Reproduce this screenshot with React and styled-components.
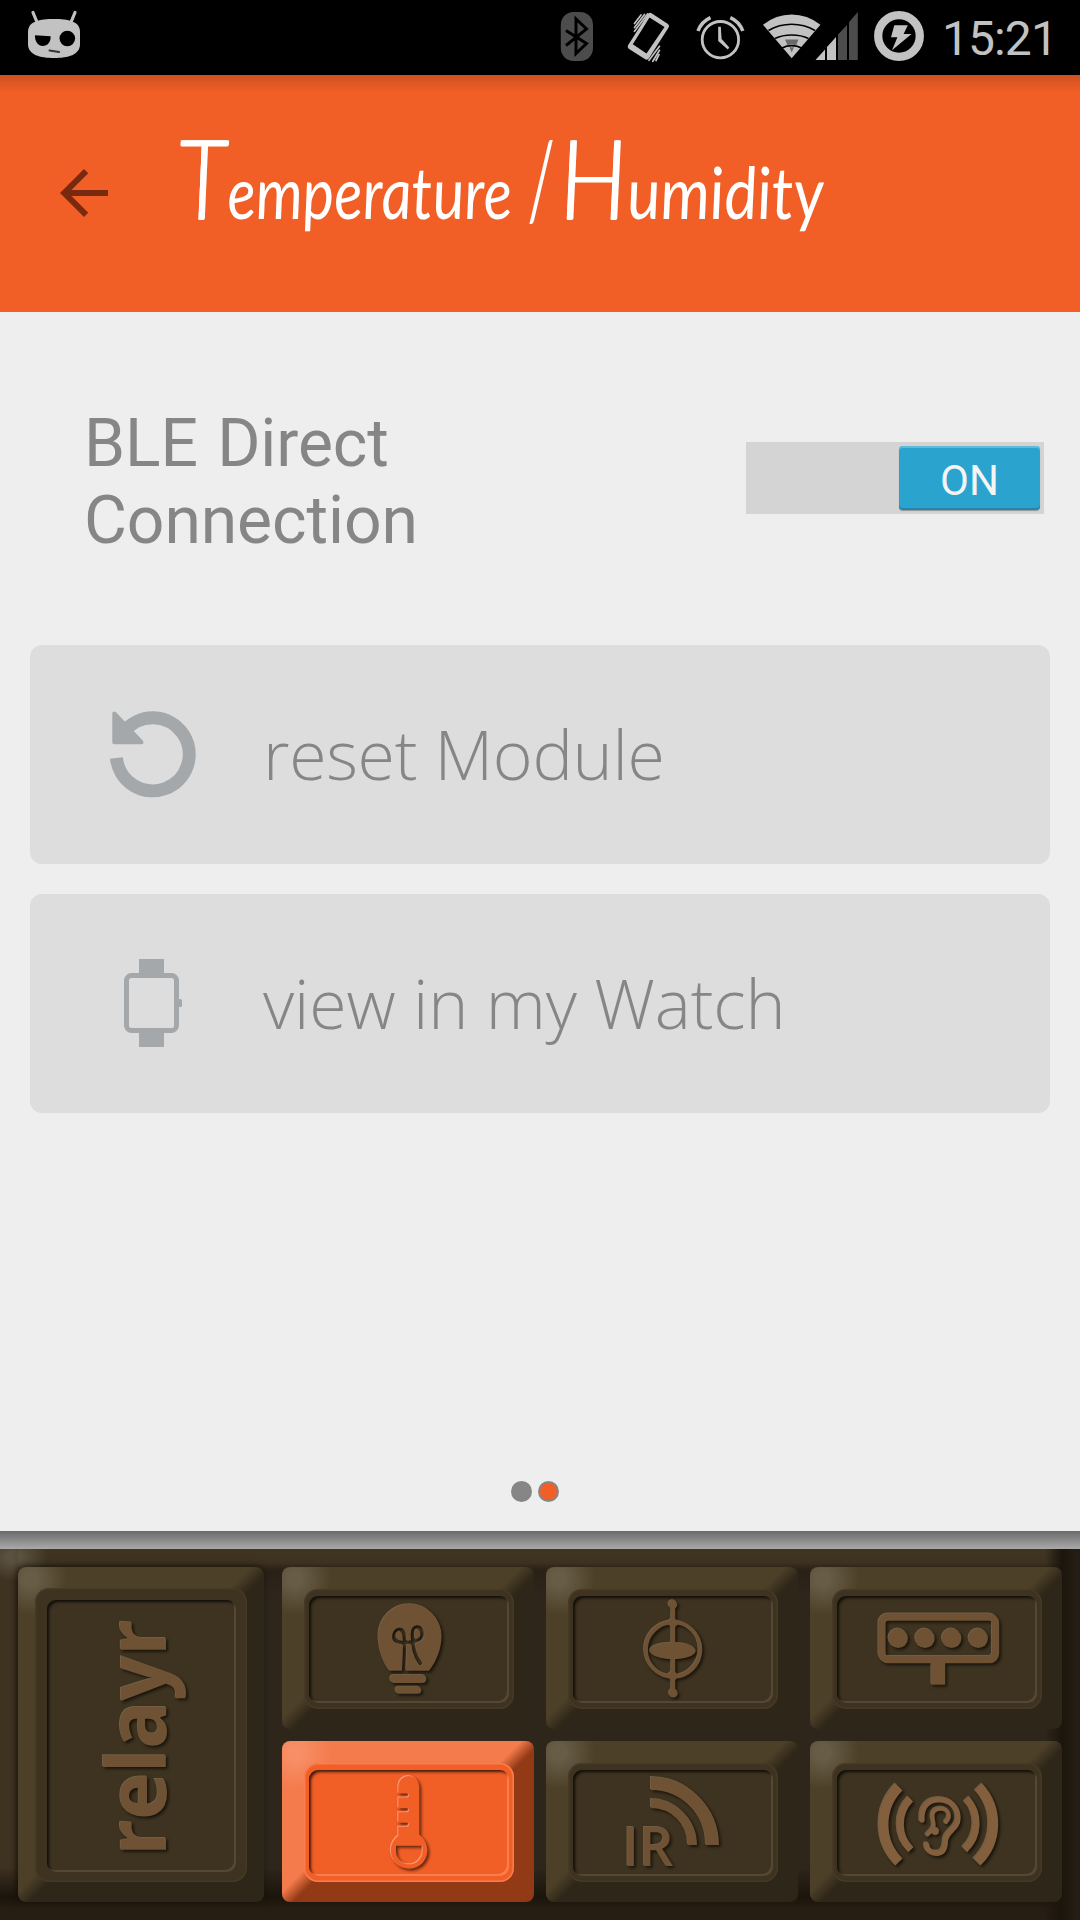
import React from "react";
import styled, { createGlobalStyle, css } from "styled-components";

const GlobalStyle = createGlobalStyle`
  * { box-sizing: border-box; }
  html, body { margin: 0; padding: 0; }
  body { background: #eee; font-family: Roboto, sans-serif; }
  svg { display: block; flex: none; }
`;

const Screen = styled.div`
  width: 1080px;
  height: 1920px;
  display: flex;
  flex-direction: column;
  overflow: hidden;
  background: #eeeeee;
`;

/* ---------- status bar ---------- */

const StatusBar = styled.div`
  flex: none;
  height: 75px;
  display: flex;
  align-items: center;
  justify-content: space-between;
  padding: 0 23px 0 24px;
  background: #000;
`;

const StatusGroup = styled.div`
  display: flex;
  align-items: center;
`;

const StatusIcon = styled.svg`
  width: ${(p) => p.$w}px;
  height: 75px;
  margin-right: ${(p) => p.$after || 0}px;
`;

const Clock = styled.span`
  width: 131px;
  padding-top: 2px;
  font: 400 48px/75px Roboto, sans-serif;
  letter-spacing: -0.9px;
  color: #c2c2c2;
  text-align: right;
  white-space: nowrap;
`;

const LIGHT = "#c2c2c2";
const DIM = "#4c4c4c";

const CidIcon = () => (
  <StatusIcon $w={60} viewBox="24 0 60 75">
    <path d="M33 12.5L36.5 21M75 12.5L71.5 21" stroke={LIGHT} strokeWidth="3.2" strokeLinecap="round" />
    <path d="M54 19C68 19 80 21 80 32V44C80 55 68 58 54 58S28 55 28 44V32C28 21 40 19 54 19Z" fill={LIGHT} />
    <circle cx="67.3" cy="38.5" r="7.8" />
    <path d="M35 35.3L50.6 36.3C51 42 47.5 46 42.8 46S34.6 41.5 35 35.3Z" />
    <path d="M49.5 50.4L59 52" stroke="#333" strokeWidth="2" strokeLinecap="round" />
  </StatusIcon>
);

const BluetoothIcon = () => (
  <StatusIcon $w={38} $after={28} viewBox="558 0 38 75">
    <rect x="560.8" y="12" width="32.2" height="49" rx="12.5" ry="13" fill={DIM} />
    <path d="M566 30.5L586.5 43.5L576 53.5V19L586.5 29L566 45.5" fill="none" stroke="#000" strokeWidth="3" />
  </StatusIcon>
);

const VibrateIcon = () => (
  <StatusIcon $w={48} $after={23} viewBox="624 0 48 75">
    <path
      fillRule="evenodd"
      fill={LIGHT}
      d="M651.5 13.2L668 24Q669.8 25.5 668.6 27.6L649 58.3Q647.5 60.5 645.2 59.3L628.7 48.7Q626.8 47.2 628.2 45L647.8 14.2Q649.3 12 651.5 13.2ZM649.5 17.6L632.8 44.3L646.5 53.4L664.5 27Z"
    />
    <path d="M641 15L634.5 23.5M644.5 14.5L634.5 27.5M647.5 14L634.5 31.3M659.5 46.3L649 60.3M659.5 50.3L652.8 61.3M659 54.6L656 60.5" stroke={LIGHT} strokeWidth="1.7" strokeLinecap="round" />
  </StatusIcon>
);

const AlarmIcon = () => (
  <StatusIcon $w={51} $after={15} viewBox="695 0 51 75">
    <circle cx="720.4" cy="39.7" r="18.2" fill="none" stroke={LIGHT} strokeWidth="2.8" />
    <path d="M718.2 26.7H720.8L721.6 39L729.3 47.6L727.8 49.6L718.2 41Z" fill={LIGHT} />
    <path d="M698 31Q701.5 21.5 710.5 17.6M742.8 31Q739.3 21.5 730.3 17.6" fill="none" stroke={LIGHT} strokeWidth="3.6" />
  </StatusIcon>
);

const SignalIcon = () => (
  <StatusIcon $w={99} $after={12} viewBox="761 0 99 75">
    <path d="M791.7 58.3L763 24.7Q776 14.5 791.7 14.5T820.4 24.7Z" fill={LIGHT} />
    <path d="M768.5 30.5Q779 24.3 791.7 24.3T815 30.5M775 38.5Q782 35 791.7 35T808.5 38.5M782 48Q786.5 45.6 791.7 45.6T801.5 48" fill="none" stroke="#000" strokeWidth="1.6" />
    <path d="M785 39.6H798.5L796 45.4Q791.7 43.6 787.6 45.4ZM789.5 47.2H794L791.7 52.5Z" fill="#6a6a6a" />
    <path d="M815.5 60L825 49.5V60ZM827 60V47L836 37V60Z" fill={LIGHT} />
    <path d="M838 60V34.5L847 25V60ZM849 60V22.2L857.8 12V60Z" fill={DIM} />
  </StatusIcon>
);

const BatteryIcon = () => (
  <StatusIcon $w={54} viewBox="872 0 54 75">
    <circle cx="899" cy="36" r="20.8" fill="none" stroke={LIGHT} strokeWidth="8.3" />
    <path d="M894.3 25.3H907.8L903.6 34H911.5L892 50.3L897.4 37.3H891Z" fill={LIGHT} />
  </StatusIcon>
);

/* ---------- header ---------- */

const Header = styled.header`
  flex: none;
  height: 237px;
  display: flex;
  align-items: center;
  padding: 0 48px;
  background: linear-gradient(rgba(110, 40, 20, 0.27), rgba(110, 40, 20, 0) 18px), #f25f26;
`;

const BackArrow = styled.svg`
  width: 72px;
  height: 72px;
  margin-bottom: 1px;
`;

const Title = styled.h1`
  display: flex;
  align-items: baseline;
  margin: 0 0 16px 58px;
  height: 130px;
  color: #fff;
  font: italic 400 72px/130px Lato, sans-serif;
`;

const TitleWord = styled.span`
  display: block;
  width: ${(p) => p.$w}px;
  white-space: nowrap;
  transform: scaleX(${(p) => p.$sx}) skewX(4deg);
  transform-origin: 0 50%;
  &::first-letter {
    font-size: 111px;
    font-weight: 300;
    line-height: 1;
    text-shadow: 1px 0 0 #fff, 2px 0 0 #fff, 0 1px 0 #fff, 1px 1px 0 #fff;
  }
`;

const TitleSlash = styled.span`
  display: block;
  width: 29px;
  font-size: 108px;
  font-weight: 400;
  line-height: 1;
  transform: scaleX(0.48);
  transform-origin: 0 50%;
`;

/* ---------- content ---------- */

const Content = styled.main`
  flex: 1;
  display: flex;
  flex-direction: column;
  padding: 0 30px;
`;

const ConnectionRow = styled.section`
  height: 333px;
  display: flex;
  align-items: center;
  justify-content: space-between;
  padding: 0 6px 0 54px;
`;

const ConnectionLabel = styled.div`
  width: 400px;
  padding-top: 7px;
  color: #868686;
  font: 400 66px/77px Roboto, sans-serif;
  letter-spacing: -0.1px;
  word-spacing: 3px;
`;

const Switch = styled.div`
  width: 298px;
  height: 72px;
  display: flex;
  justify-content: flex-end;
  margin-bottom: 1px;
  padding: 4px 4px 4px 0;
  background: #d4d4d4;
`;

const Thumb = styled.div`
  width: 141px;
  height: 64px;
  border-radius: 4px;
  background: #2aa3cf;
  box-shadow: inset 0 2px 0 #62bad9, inset 0 -2px 0 #2386ab, 0 1px 1px rgba(0, 0, 0, 0.3);
  color: #f4f4f4;
  font: 400 42px/69px Roboto, sans-serif;
  text-align: center;
`;

const Actions = styled.section`
  display: flex;
  flex-direction: column;
  gap: 30px;
`;

const ActionButton = styled.div`
  height: 219px;
  display: flex;
  align-items: center;
  padding-left: 80px;
  border-radius: 12px;
  background: #dddddd;
`;

const ActionIcon = styled.svg`
  width: 86px;
  height: 90px;
`;

const ActionLabel = styled.span`
  margin-left: 67px;
  padding-bottom: 2px;
  color: #868686;
  font: 300 68px/90px "Open Sans", sans-serif;
  letter-spacing: ${(p) => p.$spacing}px;
  white-space: nowrap;
`;

const Pager = styled.div`
  display: flex;
  justify-content: center;
  gap: 6px;
  margin: auto 10px 29px 0;
`;

const Dot = styled.i`
  width: 21px;
  height: 21px;
  border: 2px solid #868686;
  border-radius: 50%;
  background: ${(p) => (p.$active ? "#f25f26" : "#868686")};
`;

const Divider = styled.div`
  flex: none;
  height: 18px;
  background: linear-gradient(#6b6b6b, #a9a9a9);
`;

/* ---------- keyboard ---------- */

const Board = styled.nav`
  flex: none;
  height: 371px;
  display: grid;
  grid-template-columns: repeat(4, 252px);
  grid-template-rows: 162px 161px;
  gap: 12px;
  padding: 18px;
  background:
    radial-gradient(ellipse 34px 24px at 14px 8px, rgba(120, 112, 95, 0.5) 20%, transparent) 0 0 / 60px 40px no-repeat,
    linear-gradient(90deg, rgba(27, 21, 12, 0), #1b150c 17px, #251d13 30px) 100% 0 / 35px 100% no-repeat,
    linear-gradient(rgba(27, 21, 12, 0), #1b150c 30px, #261d13 42px) 0 100% / 100% 53px no-repeat,
    linear-gradient(90deg, #3e3221 12px, #30271a 18px) 0 0 / 18px 100% no-repeat,
    linear-gradient(#403520, #3d3220 14px, #332919 17px, #292117 22px, #2e261b 48px) 0 0 / 100% 48px no-repeat,
    #2e261b;
`;

const tones = {
  wood: { light: "#4c4028", dark: "#2e2618", face: "#3e3320", glow: "rgba(130,120,100,.5)", edge: "rgba(108,94,72,.5)", rim: "rgba(110,96,74,.16)" },
  orange: { light: "#f47b4c", dark: "#923915", face: "#f25f26", glow: "rgba(250,155,120,.6)", edge: "rgba(255,145,100,.65)", rim: "rgba(255,150,110,.55)" },
};

const Key = styled.div`
  ${({ $tone }) => {
    const t = tones[$tone || "wood"];
    return css`
      background:
        radial-gradient(circle 36px at 13px 12px, ${t.glow} 20%, transparent) 0 0 / 60px 60px no-repeat,
        linear-gradient(135deg, ${t.light} 32%, ${t.dark} 62%) 100% 0 / 36px 36px no-repeat,
        linear-gradient(135deg, ${t.light} 36%, ${t.dark} 66%) 0 100% / 36px 36px no-repeat,
        linear-gradient(${t.light}, ${t.light}) 0 0 / calc(100% - 36px) 30px no-repeat,
        linear-gradient(${t.light}, ${t.light}) 0 0 / 30px calc(100% - 36px) no-repeat,
        ${t.dark};
      --face: ${t.face};
      --edge: ${t.edge};
      --rim: ${t.rim};
    `;
  }}
  width: ${(p) => (p.$tall ? 246 : 252)}px;
  grid-row: ${(p) => (p.$tall ? "1 / 3" : "auto")};
  display: flex;
  border-radius: 8px;
  padding: ${(p) => (p.$tall ? "21px 17px 20px 17px" : "22px 20px 20px 22px")};
  box-shadow: ${(p) => (p.$tall ? "-1px -1px 6px rgba(15,10,4,.55)" : "none")};
`;

const Plate = styled.div`
  flex: 1;
  display: flex;
  padding: ${(p) => (p.$tall ? "12px 11px 10px 12px" : "7px 5px 6px 5px")};
  border-radius: 14px;
  background: var(--face);
  box-shadow: inset 0 0 0 1.5px var(--rim);
`;

const Recess = styled.div`
  flex: 1;
  display: flex;
  border-radius: 9px;
  background: var(--face);
  box-shadow: inset -2px -2px 0 var(--edge), inset 2px 2px 3px rgba(0, 0, 0, 0.75);
`;

const Glyph = styled.svg`
  width: ${(p) => p.$w || 200}px;
  height: ${(p) => p.$h || 107}px;
  overflow: visible;
  color: ${(p) => p.$color || "#6f5133"};
  filter: drop-shadow(-0.6px -0.6px 0.3px ${(p) => p.$shine || "rgba(150,125,95,.6)"})
    drop-shadow(2px 2px 1.5px rgba(0, 0, 0, 0.6));
`;

const RaisedKey = ({ tone, tall, children }) => (
  <Key $tone={tone} $tall={tall}>
    <Plate $tall={tall}>
      <Recess>{children}</Recess>
    </Plate>
  </Key>
);

const RelayrLogo = () => (
  <Glyph $w={189} $h={272} viewBox="0 0 189 272">
    <text transform="translate(119 256) rotate(-90)" textLength="236" lengthAdjust="spacingAndGlyphs" fontFamily="'Open Sans', sans-serif" fontWeight="700" fontSize="82" fill="currentColor">relayr</text>
  </Glyph>
);

const BulbGlyph = () => (
  <Glyph viewBox="0 0 200 107">
    <defs>
      <mask id="filament">
        <rect width="200" height="107" fill="#fff" />
        <path d="M95 76C95.5 62 97 50 95.5 39C93.5 31 86.5 33 85.3 39.5C84.3 46 91 47.5 98 47C108 46.5 114.5 44 113.5 37C112 29 104 29.5 103.8 38C103.8 52 107 62 112 68" fill="none" stroke="#000" strokeWidth="4.2" strokeLinecap="round" />
      </mask>
    </defs>
    <path mask="url(#filament)" fill="currentColor" d="M80.3 74.7C74 66 69.5 53 69.5 39.7A31.5 31.5 0 0 1 132.5 39.7C132.5 53 127 66 120 74.7Z" />
    <rect x="81.3" y="79" width="36" height="8" rx="4" fill="currentColor" />
    <rect x="86.7" y="90.7" width="25.5" height="7" rx="3.5" fill="currentColor" />
  </Glyph>
);

const GyroGlyph = () => (
  <Glyph viewBox="0 0 200 107">
    <g fill="currentColor">
      <circle cx="99.9" cy="8.5" r="4.3" />
      <circle cx="100.4" cy="97.3" r="4.3" />
      <rect x="98.2" y="8" width="4" height="89" />
      <ellipse cx="99.9" cy="54.9" rx="22.8" ry="8.2" />
      <path d="M100 21L106 27L100 33L94 27ZM100 74L106 80L100 86L94 80Z" />
    </g>
    <circle cx="100.2" cy="53.6" r="27.2" fill="none" stroke="currentColor" strokeWidth="3.8" />
  </Glyph>
);

const ColorSensorGlyph = () => (
  <Glyph viewBox="0 0 200 107">
    <rect x="45" y="21.2" width="113.6" height="42.4" rx="6" fill="none" stroke="currentColor" strokeWidth="7.2" />
    <g fill="currentColor">
      {[61.2, 88, 114.7, 141.3].map((x) => (
        <circle key={x} cx={x} cy="42.3" r="9.7" />
      ))}
      <rect x="94.4" y="64" width="13.8" height="24.7" />
    </g>
  </Glyph>
);

const ThermometerGlyph = () => (
  <Glyph viewBox="0 0 200 107" $color="#f25f26" $shine="rgba(255,165,130,.85)">
    <path
      fill="currentColor"
      fillRule="evenodd"
      d="M89.3 16.5A10.5 10.5 0 0 1 110.3 16.5V65.3A18.3 18.3 0 1 1 89.3 65.7V56.7H98A2 2 0 0 0 98 52.7H89.3V42.3H98A2 2 0 0 0 98 38.3H89.3V27.6H98A2 2 0 0 0 98 23.6H89.3ZM87 75.7V81A13.3 13.3 0 0 0 113.6 81V75.7Z"
    />
  </Glyph>
);

const InfraredGlyph = () => (
  <Glyph viewBox="0 0 200 107">
    <g fill="none" stroke="currentColor">
      <path d="M78 13.5A61.5 61.5 0 0 1 139.5 75" strokeWidth="13" />
      <path d="M78 33.5A41.5 41.5 0 0 1 119.5 75" strokeWidth="9" />
    </g>
    <text x="49.5" y="96" textLength="51" lengthAdjust="spacingAndGlyphs" fontFamily="'Open Sans', sans-serif" fontWeight="600" fontSize="53.5" fill="currentColor">IR</text>
  </Glyph>
);

const EarGlyph = () => (
  <Glyph viewBox="0 0 200 107" $color="#835f3e">
    <g fill="none" stroke="currentColor">
      <path d="M61.9 17A53.3 53.3 0 0 0 61.9 92M141.5 17A53.3 53.3 0 0 1 140 92" strokeWidth="10" />
      <path d="M73.5 29A36 36 0 0 0 73.9 79.7M129.5 29A36 36 0 0 1 127.7 79.7" strokeWidth="7.2" />
      <path d="M85 50C84 37 91 29.7 102 29.7C114 29.7 121 38 121 48C121 60 108 61 108.3 72C108 80 104.5 83.3 99.7 83.3C94 83.3 90 80 89.7 75" strokeWidth="5.4" strokeLinecap="round" />
      <path d="M109 52C115 46 111 38.7 103.7 38.7C97 38.7 94.5 43 95.8 49C97 54 98.5 58 90.5 64.5" strokeWidth="3.9" strokeLinecap="round" />
    </g>
    <circle cx="98.3" cy="61.3" r="3.7" fill="currentColor" />
  </Glyph>
);

export default function App() {
  return (
    <Screen>
      <GlobalStyle />
      <StatusBar>
        <CidIcon />
        <StatusGroup>
          <BluetoothIcon />
          <VibrateIcon />
          <AlarmIcon />
          <SignalIcon />
          <BatteryIcon />
          <Clock>15:21</Clock>
        </StatusGroup>
      </StatusBar>

      <Header>
        <BackArrow viewBox="0 0 24 24">
          <path fill="#78290f" d="M20 11H7.83l5.59-5.59L12 4l-8 8 8 8 1.41-1.41L7.83 13H20v-2z" />
        </BackArrow>
        <Title>
          <TitleWord $w={352} $sx={0.826}>Temperature</TitleWord>
          <TitleSlash>/</TitleSlash>
          <TitleWord $w={270} $sx={0.87}>Humidity</TitleWord>
        </Title>
      </Header>

      <Content>
        <ConnectionRow>
          <ConnectionLabel>BLE Direct Connection</ConnectionLabel>
          <Switch>
            <Thumb>ON</Thumb>
          </Switch>
        </ConnectionRow>

        <Actions>
          <ActionButton>
            <ActionIcon viewBox="0 -1.5 86 90">
              <path d="M6.4 46.5A36.5 36.5 0 1 0 14.5 19.7" fill="none" stroke="#a4a8ab" strokeWidth="13" />
              <path d="M4.3 2L31.5 30.7H4.3Z" fill="#a4a8ab" stroke="#a4a8ab" strokeWidth="4" strokeLinejoin="round" />
            </ActionIcon>
            <ActionLabel $spacing={-0.3}>reset Module</ActionLabel>
          </ActionButton>
          <ActionButton>
            <ActionIcon viewBox="0 1 86 90">
              <path d="M29 1H54V16H29ZM29 74H54V89H29Z" fill="#a4a8ab" />
              <rect x="16.5" y="17.5" width="50" height="55" rx="5" fill="none" stroke="#a4a8ab" strokeWidth="5" />
              <rect x="68" y="41" width="4" height="8" rx="1.5" fill="#a4a8ab" />
            </ActionIcon>
            <ActionLabel $spacing={-0.15}>view in my Watch</ActionLabel>
          </ActionButton>
        </Actions>

        <Pager>
          <Dot />
          <Dot $active />
        </Pager>
      </Content>

      <Divider />
      <Board>
        <RaisedKey tall><RelayrLogo /></RaisedKey>
        <RaisedKey><BulbGlyph /></RaisedKey>
        <RaisedKey><GyroGlyph /></RaisedKey>
        <RaisedKey><ColorSensorGlyph /></RaisedKey>
        <RaisedKey tone="orange"><ThermometerGlyph /></RaisedKey>
        <RaisedKey><InfraredGlyph /></RaisedKey>
        <RaisedKey><EarGlyph /></RaisedKey>
      </Board>
    </Screen>
  );
}
